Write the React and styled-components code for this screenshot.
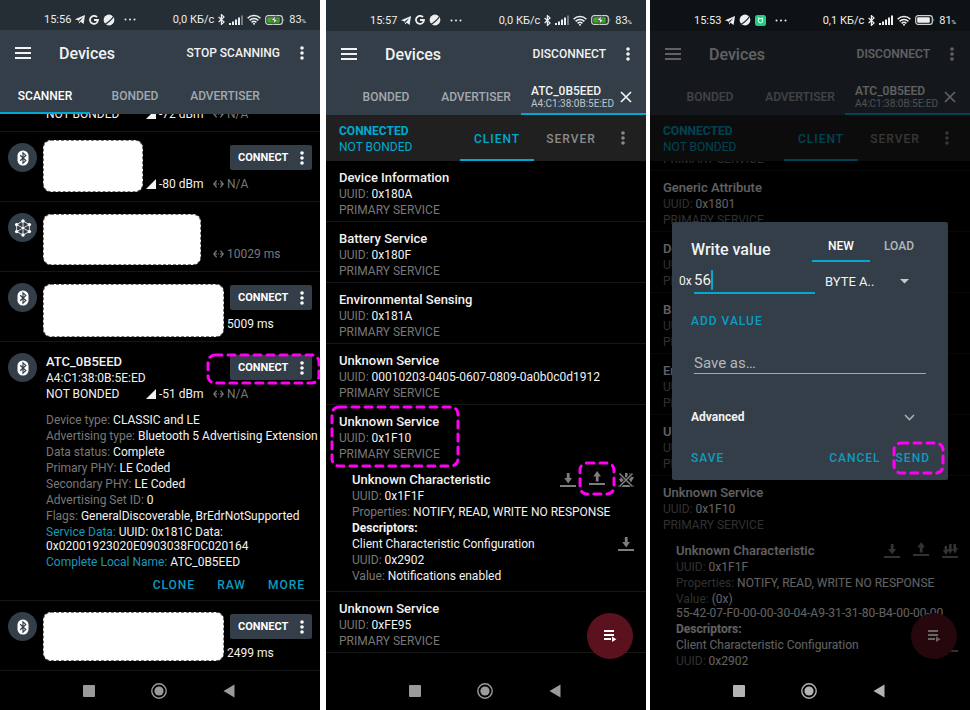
import React from "react";
import styled, { createGlobalStyle, css } from "styled-components";

const c = {
  accent: "#00a9ce",
  bar: "#333e48",
  text: "#f2f2f2",
  muted: "#787878",
  divider: "#161616",
};

const GlobalStyle = createGlobalStyle`
  * { box-sizing: border-box; }
  body { margin: 0; background: #fff; font-family: Roboto, sans-serif; }
  button, input, select { font: inherit; color: inherit; }
  button { border: 0; padding: 0; background: none; cursor: pointer; white-space: nowrap; }
  svg { display: block; flex: none; }
`;

/* ---------- page ---------- */

const Page = styled.main`
  display: flex;
  height: 100vh;
  overflow: hidden;
`;

const Phone = styled.section`
  position: relative;
  flex: 1 1 0;
  min-width: 0;
  display: flex;
  flex-direction: column;
  overflow: hidden;
  background: #000;
  color: ${c.text};
  font-size: 12px;
  margin-left: ${(p) => p.$gap || 0}px;
`;

/* ---------- icons ---------- */

const MenuIcon = () => (
  <svg width="16" height="12" viewBox="0 0 16 12" fill="currentColor">
    <path d="M0 0h16v2H0zM0 5h16v2H0zM0 10h16v2H0z" />
  </svg>
);

const DotsIcon = () => (
  <svg width="4" height="14" viewBox="0 0 4 14" fill="currentColor">
    <circle cx="2" cy="2" r="1.8" />
    <circle cx="2" cy="7" r="1.8" />
    <circle cx="2" cy="12" r="1.8" />
  </svg>
);

const CloseIcon = () => (
  <svg width="12" height="12" viewBox="0 0 12 12" stroke="currentColor" strokeWidth="1.7">
    <path d="M1 1l10 10M11 1L1 11" />
  </svg>
);

const TelegramIcon = () => (
  <svg width="10" height="9" viewBox="0 0 10 9" fill="currentColor">
    <path d="M10 0L8.6 9 5.6 6.7 4.2 8.4 3.6 5.4 0 4.2z" />
    <path d="M8.3 2.1L3.9 5.2l.5 1.7z" fill="#252d35" />
  </svg>
);

const GoogleIcon = () => (
  <svg width="10" height="10" viewBox="0 0 10 10" fill="none" stroke="currentColor" strokeWidth="1.8">
    <path d="M8 2.2A4 4 0 1 0 9 5H5" />
  </svg>
);

const BallIcon = () => (
  <svg width="12" height="12" viewBox="0 0 12 12">
    <circle cx="6" cy="6" r="5.4" fill="currentColor" />
    <path d="M.8 10.8C4 9.6 9 5.6 11 1.4" stroke="#252d35" strokeWidth="1.1" fill="none" />
  </svg>
);

const MascotIcon = () => (
  <svg width="11" height="11" viewBox="0 0 11 11">
    <rect width="11" height="11" rx="2.5" fill="#1fcf84" />
    <path d="M3.4 3.6h4.200v2.200a2.100 2.100 0 0 1-4.200 0z" fill="none" stroke="#fff" strokeWidth="1" />
    <path d="M3.2 2.400l1 1.200M7.800 2.400l-1 1.200" stroke="#fff" strokeWidth=".9" />
  </svg>
);

const MoreIcon = () => (
  <svg width="12" height="3" viewBox="0 0 12 3" fill="currentColor">
    <circle cx="1.5" cy="1.5" r="1" />
    <circle cx="6" cy="1.5" r="1" />
    <circle cx="10.5" cy="1.5" r="1" />
  </svg>
);

const BluetoothIcon = () => (
  <svg width="7" height="11" viewBox="0 0 7 11" fill="none" stroke="currentColor" strokeWidth="1.200">
    <path d="M.6 3l5.4 5-2.6 2.4V.6L6 3 .6 8" />
  </svg>
);

const SignalIcon = ({ full }) => (
  <svg width="14" height="10" viewBox="0 0 14 10" fill="currentColor">
    <path d="M0 8h2v2H0zM3 6.5h2V10H3zM6 4.5h2V10H6zM9 2.5h2V10H9z" />
    <path d="M12 .5h2V10h-2z" opacity={full ? 1 : 0.4} />
  </svg>
);

const WifiIcon = () => (
  <svg width="14" height="11" viewBox="0 0 14 11" fill="none" stroke="currentColor" strokeWidth="1.5">
    <path d="M.6 4.2a9 9 0 0 1 12.8 0M2.6 6.4a6.2 6.2 0 0 1 8.8 0M4.6 8.4a3.4 3.4 0 0 1 4.8 0" />
    <circle cx="7" cy="9.8" r="1" fill="currentColor" stroke="none" />
  </svg>
);

const BatteryIcon = ({ charging }) => (
  <svg width="20" height="10" viewBox="0 0 20 10">
    <rect x=".7" y=".7" width="16.6" height="8.6" rx="2.4" fill="none" stroke="#d0d3d6" strokeWidth="1.2" />
    <path d="M18.6 3.2q1.4 1.8 0 3.6z" fill="#d0d3d6" />
    <rect x="2.2" y="2.2" width="12.6" height="5.6" rx="1" fill={charging ? "#3faa1e" : "#eee"} />
    {charging && <path d="M10.6 .6L6 5.6h3L8.2 9.4 12.6 4.4H9.8z" fill="#fff" stroke="#252d35" strokeWidth=".6" />}
  </svg>
);

const DeviceIcon = () => (
  <svg width="12" height="16" viewBox="0 0 12 16">
    <rect x=".5" y=".5" width="11" height="15" rx="5.2" fill="#fff" />
    <path d="M3.2 5.2l5.6 5.4L6 13.2V2.8l2.8 2.6-5.6 5.4" fill="none" stroke="#333e48" strokeWidth="1.2" />
  </svg>
);

const MeshIcon = () => (
  <svg width="18" height="18" viewBox="0 0 18 18" stroke="#fff" strokeWidth=".8" fill="none">
    <path d="M9 2l6.4 3.6v7L9 16l-6.4-3.4v-7zM9 2v14M2.6 5.6l12.8 7M15.4 5.6l-12.8 7" />
    <g fill="#fff" stroke="none">
      <circle cx="9" cy="2" r="1.7" />
      <circle cx="15.4" cy="5.6" r="1.7" />
      <circle cx="15.4" cy="12.6" r="1.7" />
      <circle cx="9" cy="16" r="1.7" />
      <circle cx="2.6" cy="12.6" r="1.7" />
      <circle cx="2.6" cy="5.6" r="1.7" />
      <circle cx="9" cy="9" r="1.3" />
    </g>
  </svg>
);

const RssiIcon = () => (
  <svg width="10" height="10" viewBox="0 0 10 10" fill="currentColor">
    <path d="M10 0v10H0z" />
  </svg>
);

const IntervalIcon = () => (
  <svg width="11" height="8" viewBox="0 0 11 8" fill="none" stroke="currentColor" strokeWidth="1.2">
    <path d="M3.6 .6L.8 4l2.8 3.4M7.400 .6L10.200 4 7.400 7.400M1 4h3M7 4h3M5 4h1" />
  </svg>
);

const ReadIcon = () => (
  <svg width="16" height="14" viewBox="0 0 16 14" fill="currentColor">
    <path d="M6.8 0h2.8v5H12l-3.8 5.6L4.2 5h2.6zM0 12h16v2H0z" />
  </svg>
);

const WriteIcon = () => (
  <svg width="16" height="14" viewBox="0 0 16 14" fill="currentColor">
    <path d="M6.8 10.6h2.8v-5H12L8.2 0 4.2 5.6h2.6zM0 12h16v2H0z" />
  </svg>
);

const NotifyIcon = ({ off }) => (
  <svg width="16" height="14" viewBox="0 0 16 14" fill="currentColor">
    <path d="M2.600 2h2.600v4h1.600L4 11 .8 6h1.800zM7 0h2.600v5h1.600L8.2 10 5.400 5H7zM11.4 0H14v4h2l-3 5.500L10.200 5h1.200zM0 12h16v2H0z" />
    {off && (
      <>
        <path d="M1 0l14 14M15 0L1 14" stroke="#000" strokeWidth="3.2" />
        <path d="M1.5 .5l13 13M14.5 .5l-13 13" stroke="currentColor" strokeWidth="1.5" />
      </>
    )}
  </svg>
);

const MacroIcon = () => (
  <svg width="13" height="12" viewBox="0 0 13 12" fill="currentColor">
    <path d="M0 0h10v2H0zM0 4h10v2H0zM0 8h7v2H0zM8 6.6l4.4 2.7L8 12z" />
  </svg>
);

/* ---------- highlight marker ---------- */

const Marker = styled.svg`
  position: absolute;
  inset: ${(p) => p.$inset};
  width: ${(p) => p.$w}px;
  height: ${(p) => p.$h}px;
  pointer-events: none;
  z-index: 3;
`;

const Highlight = ({ inset, w, h }) => (
  <Marker $inset={inset} $w={w} $h={h} aria-hidden="true">
    <rect x="2" y="2" width={w - 4} height={h - 4} rx="7" fill="none" stroke="#ff00f2"
      strokeWidth="3" strokeLinecap="round" strokeDasharray="7 6" />
  </Marker>
);

const Marked = styled.div`
  position: relative;
  width: fit-content;
`;

/* ---------- status bar ---------- */

const StatusBar = styled.div`
  flex: none;
  position: relative;
  z-index: ${(p) => (p.$dim ? 5 : "auto")};
  display: flex;
  align-items: center;
  justify-content: space-between;
  height: ${(p) => p.$height}px;
  padding: 9px 14px 0 44px;
  background: ${(p) => (p.$dim ? "#0f1215" : "#252d35")};
  color: #eceeef;
  font-size: 11px;
`;

const StatusGroup = styled.div`
  display: flex;
  align-items: center;
  gap: ${(p) => p.$gap}px;
  white-space: nowrap;
`;

const Dots = styled.span`
  margin-left: 5px;
`;

const Percent = styled.span`
  small { font-size: 6px; }
`;

function Status({ time, speed, level, charging, height = 31, dim }) {
  return (
    <StatusBar $height={height} $dim={dim}>
      <StatusGroup $gap={4}>
        <span>{time}</span>
        <TelegramIcon />
        {dim ? <BallIcon /> : <GoogleIcon />}
        {dim ? <MascotIcon /> : <BallIcon />}
        <Dots><MoreIcon /></Dots>
      </StatusGroup>
      <StatusGroup $gap={4}>
        <span>{speed}</span>
        <BluetoothIcon />
        <SignalIcon full={!charging} />
        <WifiIcon />
        <BatteryIcon charging={charging} />
        <Percent>{level}<small>%</small></Percent>
      </StatusGroup>
    </StatusBar>
  );
}

/* ---------- app bar and tabs ---------- */

const AppBar = styled.header`
  flex: none;
  display: flex;
  align-items: center;
  height: 46px;
  padding: 0 16px 0 15px;
  background: ${c.bar};
`;

const Title = styled.h1`
  flex: 1;
  margin: 0 0 0 28px;
  font-size: 16px;
  font-weight: 500;
`;

const BarAction = styled.button`
  margin-right: 20px;
  font-size: 12px;
  font-weight: 500;
`;

const TabBar = styled.nav`
  flex: none;
  display: flex;
  height: 38px;
  padding-left: ${(p) => (p.$scrolled ? 15 : 0)}px;
  background: ${c.bar};
`;

const Tab = styled.button`
  width: 90px;
  padding-top: 2px;
  box-shadow: ${(p) => (p.$active ? `inset 0 -2px ${c.accent}` : "none")};
  color: ${(p) => (p.$active ? "#fff" : "#a3a9ae")};
  font-size: 12px;
  font-weight: 500;
`;

const DeviceTab = styled.div`
  flex: 1;
  min-width: 0;
  display: flex;
  align-items: center;
  justify-content: space-between;
  padding: 2px 14px 0 10px;
  box-shadow: inset 0 -2px ${c.accent};
`;

const DeviceTabLabel = styled.button`
  display: grid;
  text-align: left;
  font-size: 12px;
  font-weight: 500;
  line-height: 13px;
  small { font-size: 10px; font-weight: 400; line-height: 11px; color: #c0c5c9; }
`;

function Header({ action }) {
  return (
    <AppBar>
      <button type="button" aria-label="Menu"><MenuIcon /></button>
      <Title>Devices</Title>
      <BarAction type="button">{action}</BarAction>
      <button type="button" aria-label="More options"><DotsIcon /></button>
    </AppBar>
  );
}

const List = styled.div`
  flex: 1;
  min-height: 0;
  overflow: hidden;
`;

/* ---------- system navigation ---------- */

const NavBar = styled.footer`
  flex: none;
  position: relative;
  z-index: ${(p) => (p.$bright ? 5 : "auto")};
  display: grid;
  grid-template-columns: repeat(3, 1fr);
  place-items: center;
  height: 39px;
  padding: 0 56px 0 54px;
  color: ${(p) => (p.$bright ? "#b4b4b4" : "#9a9a9a")};
`;

const SystemNav = ({ bright }) => (
  <NavBar $bright={bright}>
    <button type="button" aria-label="Recents">
      <svg width="12" height="12"><rect width="12" height="12" rx="1" fill="currentColor" /></svg>
    </button>
    <button type="button" aria-label="Home">
      <svg width="16" height="16" viewBox="0 0 16 16">
        <circle cx="8" cy="8" r="7.2" fill="none" stroke="currentColor" strokeWidth="1.4" />
        <circle cx="8" cy="8" r="4.6" fill="currentColor" />
      </svg>
    </button>
    <button type="button" aria-label="Back">
      <svg width="12" height="14" viewBox="0 0 12 14"><path d="M11.5 .5v13L.5 7z" fill="currentColor" /></svg>
    </button>
  </NavBar>
);

/* ---------- scanner rows ---------- */

const DeviceRow = styled.article`
  position: relative;
  display: flex;
  min-height: 70px;
  padding: 11px 8px 7px;
  border-bottom: 1px solid ${c.divider};
  ${(p) => p.$scrolledOff && css`margin-top: -52px;`}
`;

const Avatar = styled.div`
  flex: none;
  display: grid;
  place-items: center;
  width: 29px;
  height: 29px;
  border-radius: 50%;
  background: ${c.bar};
`;

const DeviceBody = styled.div`
  flex: 1;
  min-width: 0;
  margin-left: 9px;
`;

const DeviceHead = styled.div`
  display: flex;
  justify-content: space-between;
  min-height: 33px;
  line-height: 16px;
`;

const DeviceName = styled.h2`
  margin: 0;
  font-size: 13px;
  font-weight: 500;
  line-height: 17px;
`;

const Metrics = styled.div`
  display: grid;
  grid-template-columns: 100px 67px 1fr;
  line-height: 16px;
`;

const Metric = styled.span`
  display: flex;
  align-items: center;
  gap: 3px;
  white-space: nowrap;
  color: ${(p) => (p.$muted ? c.muted : "inherit")};
  padding-left: ${(p) => (p.$indent ? 14 : 0)}px;
`;

const ConnectButton = styled.button`
  display: flex;
  align-items: center;
  justify-content: space-between;
  width: 82px;
  height: 25px;
  margin-top: 2px;
  padding: 0 8px;
  border-radius: 2px;
  background: ${c.bar};
  color: #fff;
  font-size: 11px;
  font-weight: 700;
`;

const Redaction = styled.div`
  position: absolute;
  left: 43px;
  top: ${(p) => p.$top}px;
  width: ${(p) => p.$width}px;
  height: ${(p) => p.$height}px;
  border: 1px dashed #777;
  border-radius: 8px;
  background: #fff;
`;

const Details = styled.ul`
  display: grid;
  gap: 2px;
  margin: 11px 0 8px;
  padding: 0;
  list-style: none;
  line-height: 14px;
  white-space: nowrap;
`;

const Label = styled.span`
  color: ${(p) => (p.$accent ? "#1698b8" : c.muted)};
`;

const Block = styled.span`
  display: block;
`;

const DetailActions = styled.div`
  display: flex;
  justify-content: flex-end;
  padding-right: 7px;
  gap: 22px;
`;

const TextButton = styled.button`
  color: #0c9cbf;
  font-size: 12px;
  font-weight: 500;
  line-height: 16px;
  letter-spacing: 1px;
`;

const Connect = () => (
  <ConnectButton type="button">CONNECT<DotsIcon /></ConnectButton>
);

function Device({ name, address, bond, rssi, interval, intervalLit, mesh, mask, connect = true, marked, off, children }) {
  return (
    <DeviceRow $scrolledOff={off}>
      <Avatar>{mesh ? <MeshIcon /> : <DeviceIcon />}</Avatar>
      <DeviceBody>
        <DeviceHead>
          <div>
            <DeviceName>{name}</DeviceName>
            {address}
          </div>
          {connect && (
            <Marked>
              <Connect />
              {marked && <Highlight inset="0px auto auto -24px" w={115} h={32} />}
            </Marked>
          )}
        </DeviceHead>
        <Metrics>
          <span>{bond}</span>
          <Metric>{rssi && <><RssiIcon />{rssi}</>}</Metric>
          <Metric $muted={!intervalLit} $indent={intervalLit}>
            {!intervalLit && <IntervalIcon />}{interval}
          </Metric>
        </Metrics>
        {children}
      </DeviceBody>
      {mask && <Redaction $top={mask.top} $width={mask.width} $height={mask.height} />}
    </DeviceRow>
  );
}

const advertisement = [
  ["Device type:", "CLASSIC and LE"],
  ["Advertising type:", "Bluetooth 5 Advertising Extension"],
  ["Data status:", "Complete"],
  ["Primary PHY:", "LE Coded"],
  ["Secondary PHY:", "LE Coded"],
  ["Advertising Set ID:", "0"],
  ["Flags:", "GeneralDiscoverable, BrEdrNotSupported"],
  ["Service Data:", "UUID: 0x181C Data:", "0x02001923020E0903038F0C020164"],
  ["Complete Local Name:", "ATC_0B5EED"],
];

function ScannerPhone() {
  return (
    <Phone>
      <Status time="15:56" speed="0,0 КБ/с" level="83" charging height={30} />
      <Header action="STOP SCANNING" />
      <TabBar>
        <Tab type="button" $active>SCANNER</Tab>
        <Tab type="button">BONDED</Tab>
        <Tab type="button">ADVERTISER</Tab>
      </TabBar>
      <List>
        <Device off bond="NOT BONDED" rssi="-72 dBm" interval="N/A" connect={false} />
        <Device rssi="-80 dBm" interval="N/A" mask={{ top: 8, width: 100, height: 52 }} />
        <Device mesh interval="10029 ms" connect={false} mask={{ top: 12, width: 158, height: 51 }} />
        <Device interval="5009 ms" intervalLit mask={{ top: 12, width: 181, height: 53 }} />
        <Device name="ATC_0B5EED" address="A4:C1:38:0B:5E:ED" bond="NOT BONDED" rssi="-51 dBm" interval="N/A" marked>
          <Details>
            {advertisement.map(([label, value, extra]) => (
              <li key={label}>
                <Label $accent={/Service|Local/.test(label)}>{label}</Label> {value}
                {extra && <Block>{extra}</Block>}
              </li>
            ))}
          </Details>
          <DetailActions>
            <TextButton type="button">CLONE</TextButton>
            <TextButton type="button">RAW</TextButton>
            <TextButton type="button">MORE</TextButton>
          </DetailActions>
        </Device>
        <Device interval="2499 ms" intervalLit mask={{ top: 11, width: 181, height: 49 }} />
      </List>
      <SystemNav />
    </Phone>
  );
}

/* ---------- services ---------- */

const StatusRow = styled.div`
  flex: none;
  display: flex;
  height: 46px;
  padding: 0 21px 0 13px;
  background: #202020;
`;

const Connection = styled.div`
  flex: 1;
  align-self: center;
  padding-top: 1px;
  color: ${c.accent};
  line-height: 16px;
  strong { display: block; font-weight: 700; }
`;

const RoleTab = styled.button`
  width: 74px;
  padding-top: 2px;
  box-shadow: ${(p) => (p.$active ? `inset 0 -2px ${c.accent}` : "none")};
  color: ${(p) => (p.$active ? c.accent : "#8a8a8a")};
  font-size: 12px;
  font-weight: 500;
  letter-spacing: 1px;
`;

const RoleMenu = styled.button`
  margin-left: 13px;
  color: #8a8a8a;
`;

const ServiceItem = styled.article`
  padding: 8px 12px 3px 13px;
  border-bottom: 1px solid ${c.divider};
  ${(p) => p.$scrolledOff && css`margin-top: -51px;`}
`;

const ServiceText = styled.div`
  line-height: 16px;
`;

const ItemTitle = styled.h2`
  margin: 0;
  font-size: 13px;
  font-weight: 500;
  line-height: 17px;
`;

const Characteristic = styled.div`
  display: grid;
  gap: 2px;
  padding: 9px 0 5px 13px;
  line-height: 14px;
  white-space: nowrap;
`;

const Line = styled.div`
  display: flex;
  justify-content: space-between;
  align-items: flex-start;
  height: ${(p) => (p.$head ? 16 : 14)}px;
`;

const Tools = styled.div`
  display: flex;
  gap: 13px;
  color: #7d7d7d;
`;

const Fab = styled.button`
  position: absolute;
  right: 13px;
  bottom: 51px;
  display: grid;
  place-items: center;
  width: 46px;
  height: 46px;
  border-radius: 50%;
  background: #5c121e;
  color: #fff;
`;

function Service({ title, uuid, marked, off, children }) {
  return (
    <ServiceItem $scrolledOff={off}>
      <Marked>
        <ServiceText>
          <ItemTitle>{title}</ItemTitle>
          <div><Label>UUID:</Label> {uuid}</div>
          <Label>PRIMARY SERVICE</Label>
        </ServiceText>
        {marked && <Highlight inset="-8px auto auto -9px" w={130} h={63} />}
      </Marked>
      {children}
    </ServiceItem>
  );
}

function CharacteristicInfo({ value, configValue, notifying, marked }) {
  return (
    <Characteristic>
      <Line $head>
        <ItemTitle>Unknown Characteristic</ItemTitle>
        <Tools>
          <button type="button" aria-label="Read"><ReadIcon /></button>
          <Marked>
            <button type="button" aria-label="Write"><WriteIcon /></button>
            {marked && <Highlight inset="-10px auto auto -11px" w={38} h={35} />}
          </Marked>
          <button type="button" aria-label="Notifications"><NotifyIcon off={notifying} /></button>
        </Tools>
      </Line>
      <div><Label>UUID:</Label> 0x1F1F</div>
      <div><Label>Properties:</Label> NOTIFY, READ, WRITE NO RESPONSE</div>
      {value && <div><Label>Value:</Label> (0x)<Block>{value}</Block></div>}
      <strong>Descriptors:</strong>
      <Line>
        Client Characteristic Configuration
        <Tools><button type="button" aria-label="Read descriptor"><ReadIcon /></button></Tools>
      </Line>
      <div><Label>UUID:</Label> 0x2902</div>
      {configValue && <div><Label>Value:</Label> {configValue}</div>}
    </Characteristic>
  );
}

function DeviceScreen({ children }) {
  return (
    <>
      <Header action="DISCONNECT" />
      <TabBar $scrolled>
        <Tab type="button">BONDED</Tab>
        <Tab type="button">ADVERTISER</Tab>
        <DeviceTab>
          <DeviceTabLabel type="button">ATC_0B5EED<small>A4:C1:38:0B:5E:ED</small></DeviceTabLabel>
          <button type="button" aria-label="Close tab"><CloseIcon /></button>
        </DeviceTab>
      </TabBar>
      <StatusRow>
        <Connection><strong>CONNECTED</strong>NOT BONDED</Connection>
        <RoleTab type="button" $active>CLIENT</RoleTab>
        <RoleTab type="button">SERVER</RoleTab>
        <RoleMenu type="button" aria-label="Service options"><DotsIcon /></RoleMenu>
      </StatusRow>
      <List>{children}</List>
      <Fab type="button" aria-label="Macros"><MacroIcon /></Fab>
    </>
  );
}

function ServicesPhone() {
  return (
    <Phone $gap={6}>
      <Status time="15:57" speed="0,0 КБ/с" level="83" charging />
      <DeviceScreen>
        <Service title="Device Information" uuid="0x180A" />
        <Service title="Battery Service" uuid="0x180F" />
        <Service title="Environmental Sensing" uuid="0x181A" />
        <Service title="Unknown Service" uuid="00010203-0405-0607-0809-0a0b0c0d1912" />
        <Service title="Unknown Service" uuid="0x1F10" marked>
          <CharacteristicInfo configValue="Notifications enabled" notifying marked />
        </Service>
        <Service title="Unknown Service" uuid="0xFE95" />
      </DeviceScreen>
      <SystemNav />
    </Phone>
  );
}

/* ---------- write dialog ---------- */

const Scrim = styled.div`
  position: absolute;
  inset: 0;
  z-index: 4;
  display: flex;
  align-items: center;
  padding: 0 22px 8px;
  background: rgba(0, 0, 0, 0.6);
`;

const Dialog = styled.form`
  flex: 1;
  min-width: 0;
  padding: 10px 18px 14px 19px;
  border-radius: 2px;
  background: ${c.bar};
`;

const DialogHead = styled.div`
  display: flex;
  justify-content: space-between;
  padding-right: 2px;
`;

const DialogTitle = styled.h2`
  margin: 0;
  font-size: 16px;
  font-weight: 500;
  line-height: 36px;
`;

const DialogTabs = styled.div`
  display: flex;
  height: 30px;
`;

const DialogTab = styled(Tab)`
  width: 58px;
  padding: 0 0 2px;
  color: ${(p) => (p.$active ? "#fff" : "#b3b8bc")};
`;

const ValueRow = styled.div`
  display: flex;
  align-items: center;
  height: 26px;
  margin: 0 0 19px -12px;
`;

const Prefix = styled.label`
  width: 15px;
  font-size: 12px;
`;

const ValueField = styled.div`
  position: relative;
  flex: 1;
  min-width: 0;
`;

const ValueInput = styled.input`
  display: block;
  width: 100%;
  height: 26px;
  padding: 0;
  border: 0;
  border-bottom: 2px solid ${c.accent};
  outline: 0;
  background: none;
  font-size: 15px;
`;

const Caret = styled.span`
  position: absolute;
  left: 17px;
  top: 2px;
  width: 2px;
  height: 20px;
  background: ${c.accent};
`;

const FormatField = styled.div`
  display: flex;
  align-items: center;
  width: 105px;
  margin-left: 10px;
`;

const FormatSelect = styled.select`
  width: 75px;
  padding: 0;
  border: 0;
  appearance: none;
  background: none;
  font-size: 13px;
`;

const SaveInput = styled.input`
  display: block;
  width: calc(100% - 7px);
  height: 22px;
  margin: 23px 0 35px 3px;
  padding: 0;
  border: 0;
  border-bottom: 1px solid #a3a8ac;
  outline: 0;
  background: none;
  font-size: 15px;
  &::placeholder { color: #b4b8bb; opacity: 1; }
`;

const Advanced = styled.button`
  display: flex;
  align-items: center;
  justify-content: space-between;
  width: 100%;
  padding-right: 15px;
  font-size: 12px;
  font-weight: 700;
  line-height: 16px;
`;

const DialogActions = styled.div`
  display: flex;
  gap: 15px;
  margin-top: 25px;
  & > ${TextButton}:first-child { margin-right: auto; }
`;

function WriteDialog() {
  return (
    <Scrim>
      <Dialog role="dialog" aria-labelledby="write-title" onSubmit={(e) => e.preventDefault()}>
        <DialogHead>
          <DialogTitle id="write-title">Write value</DialogTitle>
          <DialogTabs>
            <DialogTab type="button" $active>NEW</DialogTab>
            <DialogTab type="button">LOAD</DialogTab>
          </DialogTabs>
        </DialogHead>
        <ValueRow>
          <Prefix htmlFor="value">0x</Prefix>
          <ValueField>
            <ValueInput id="value" defaultValue="56" />
            <Caret />
          </ValueField>
          <FormatField>
            <FormatSelect aria-label="Format" defaultValue="bytes">
              <option value="bytes">BYTE A..</option>
            </FormatSelect>
            <svg width="9" height="5" viewBox="0 0 9 5"><path d="M0 0h9L4.5 4.5z" fill="#c5c9cc" /></svg>
          </FormatField>
        </ValueRow>
        <TextButton type="button">ADD VALUE</TextButton>
        <SaveInput aria-label="Save as" placeholder="Save as…" />
        <Advanced type="button">
          Advanced
          <svg width="11" height="7" viewBox="0 0 11 7" fill="none" stroke="#a7adb2" strokeWidth="1.6">
            <path d="M1 1l4.5 4.5L10 1" />
          </svg>
        </Advanced>
        <DialogActions>
          <TextButton type="button">SAVE</TextButton>
          <TextButton type="button">CANCEL</TextButton>
          <Marked>
            <TextButton type="submit">SEND</TextButton>
            <Highlight inset="-9px auto auto -4px" w={53} h={34} />
          </Marked>
        </DialogActions>
      </Dialog>
    </Scrim>
  );
}

function WritePhone() {
  return (
    <Phone $gap={4}>
      <Status time="15:53" speed="0,1 КБ/с" level="81" dim />
      <DeviceScreen>
        <Service off title="Generic Access" uuid="0x1800" />
        <Service title="Generic Attribute" uuid="0x1801" />
        <Service title="Device Information" uuid="0x180A" />
        <Service title="Battery Service" uuid="0x180F" />
        <Service title="Environmental Sensing" uuid="0x181A" />
        <Service title="Unknown Service" uuid="00010203-0405-0607-0809-0a0b0c0d1912" />
        <Service title="Unknown Service" uuid="0x1F10">
          <CharacteristicInfo value="55-42-07-F0-00-00-30-04-A9-31-31-80-B4-00-00-00" />
        </Service>
      </DeviceScreen>
      <SystemNav bright />
      <WriteDialog />
    </Phone>
  );
}

export default function App() {
  return (
    <>
      <GlobalStyle />
      <Page>
        <ScannerPhone />
        <ServicesPhone />
        <WritePhone />
      </Page>
    </>
  );
}
